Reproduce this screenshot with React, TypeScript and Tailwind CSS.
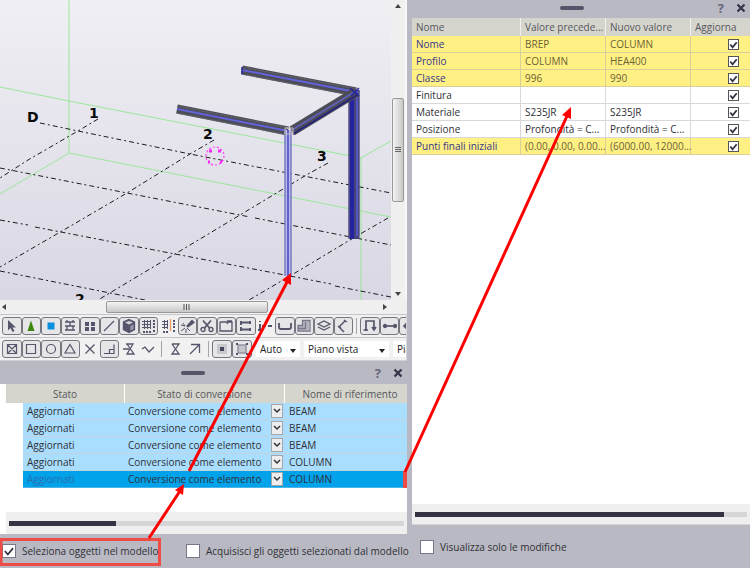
import { useState } from "react";
import type { ReactNode } from "react";

type Tool = { name: string; icon: ReactNode; framed?: boolean };

const Icon = ({ children }: { children: ReactNode }) => (
  <svg viewBox="0 0 16 16" className="size-4" fill="none" stroke="#55556b" strokeWidth="1.3">
    {children}
  </svg>
);

const dots = (xs: number[], ys: number[], size: number) =>
  xs.flatMap((x) => ys.map((y) => <rect key={`${x}-${y}`} x={x} y={y} width={size} height={size} fill="#55556b" stroke="none" />));

const snapTools: Tool[] = [
  { name: "Seleziona", framed: true, icon: <path d="M4 2v10.500l2.500-2.500 2 4 2-1-2-3.500H12Z" fill="#55556b" stroke="none" /> },
  { name: "Componenti", framed: true, icon: <path d="M8 2.500 11.500 13h-7Z" fill="#3c870d" stroke="none" /> },
  { name: "Parti", framed: true, icon: <rect x="4.500" y="4.500" width="7" height="7" fill="#0a8ede" stroke="none" /> },
  { name: "Superfici", framed: true, icon: <path d="M3 4h10M3 8h10M3 12h10M8 4v4M5 8v4M11 8v4M5 2v2M11 2v2" /> },
  { name: "Punti", framed: true, icon: dots([3, 9], [4, 9], 4) },
  { name: "Linee", framed: true, icon: <path d="m3 13 10-10" /> },
  {
    name: "Solidi",
    framed: true,
    icon: (
      <>
        <path d="M8 1.500 13.500 4v7.500L8 14.500 2.500 11.500V4Z" fill="#55556b" />
        <path d="M4 4.500 8 3l4 1.500-4 2Z" fill="#d4d4da" stroke="none" />
        <path d="M9.500 8v4.500l3-1.500V6.500Z" fill="#9c9caa" stroke="none" />
      </>
    ),
  },
  { name: "Griglie", framed: true, icon: <><path d="M4.500 2v9M7.500 2v9M10.500 2v9M2 3.500h9M2 6.500h9M2 9.500h9" strokeWidth="1" />{dots([13], [2, 5, 8, 12], 2)}{dots([3, 6, 9], [13], 2)}</> },
  { name: "Linea griglia", icon: <>{dots([13], [2, 5, 8, 12], 2)}{dots([3, 6], [13], 2)}<path d="M4.500 2v9M7.500 2v9M2 3.500h6M2 6.500h6M2 9.500h6" strokeWidth="1" /><path d="M10.500 1v12" stroke="#ee9a63" /></> },
  { name: "Saldature", framed: true, icon: <><path d="m8 8 5-5.500 2 2L9 9Z" fill="#55556b" /><path d="M6 8 2 7M6 10l-4 3M7 11v4M6 8 4 5M8 10l3 3" strokeWidth="1" /></> },
  { name: "Tagli", framed: true, icon: <><path d="M4 2.500 10.500 10M12 2.500 5.500 10" strokeWidth="1.800" /><circle cx="4" cy="11.500" r="2" /><circle cx="12" cy="11.500" r="2" /></> },
  { name: "Viste", framed: true, icon: <path d="M2 4h7M2 4v9h12V4h-4l-1 2M9 3h5" /> },
  { name: "Bulloni", framed: true, icon: <path d="M3 3v4M3 9v4M3 4.500h10M3 11.500h10M12 3v3M12 10v3" strokeWidth="2" /> },
  { name: "Bullone singolo", icon: <path d="M3 3v1M3 6v6M5 8h4M11 8h4M1 12h3" strokeWidth="2" /> },
  { name: "Armature", framed: true, icon: <path d="M2 5v4q0 2 2 2h8q2 0 2-2V5" strokeWidth="1.800" /> },
  { name: "Getti", framed: true, icon: <><path d="M2 12V8h5V3h6v9Z" fill="#b4b4bd" stroke="none" /><path d="M2 7.500h4.500V2.500H14V13H2ZM2 10.500h7.500V4" stroke="#77778a" /></> },
  { name: "Livelli", framed: true, icon: <path d="m2 6 6-3 6 3-6 3ZM2 9l6 3 6-3" /> },
  { name: "Distanze", framed: true, icon: <path d="m10 3-6 6 5 5M3 8l3 2M9 2l3 2" strokeWidth="1.500" /> },
];

const moreTools: Tool[] = [
  { name: "Assemblaggi", framed: true, icon: <path d="M4 13V3h8v9M1.500 12H6M10 9l2 3 2-3" strokeWidth="1.700" /> },
  { name: "Oggetti", framed: true, icon: <><path d="M3 8h10" strokeWidth="1.700" /><circle cx="3" cy="8" r="1.500" fill="#55556b" /><circle cx="13" cy="8" r="1.500" fill="#55556b" /></> },
  { name: "Task", framed: true, icon: <path d="M3 8h11M6 5 3 8l3 3" strokeWidth="1.700" /> },
];

const pointTools: Tool[] = [
  { name: "Punti di riferimento", framed: true, icon: <path d="M3.500 3.500h9v9h-9ZM3.500 3.500l9 9M12.500 3.500l-9 9" strokeWidth="1.200" /> },
  { name: "Punti finali", framed: true, icon: <path d="M3.500 3.500h9v9h-9Z" strokeWidth="1.200" /> },
  { name: "Centri", framed: true, icon: <circle cx="8" cy="8" r="4.500" strokeWidth="1.200" /> },
  { name: "Punti medi", framed: true, icon: <path d="m8 3.500 5 8.500H3Z" strokeWidth="1.200" /> },
  { name: "Intersezioni", icon: <path d="m3.500 3.500 9 9M12.500 3.500l-9 9" /> },
  { name: "Perpendicolari", framed: true, icon: <path d="M3 12.500h10V3.500M8.500 12.500V8.500H13" strokeWidth="1.200" /> },
  { name: "Estensioni", icon: <path d="M5 3h7L6 13h7L6 3M2 8h6" /> },
  { name: "Qualsiasi posizione", icon: <path d="m2 8 3-2 4 5 5-5" /> },
];

const lineTools: Tool[] = [
  { name: "Vicino", icon: <path d="M5 3h7L5 13h7L5 3" /> },
  { name: "Direzione", icon: <path d="m3 13 9-9M4 3.500h8.500V12" /> },
];

const planeTools: Tool[] = [
  { name: "Piano", framed: true, icon: <><rect x="3" y="3" width="10" height="10" fill="#c8c8cf" stroke="none" /><rect x="6" y="6" width="4" height="4" fill="#44445a" stroke="none" /></> },
  { name: "Area", framed: true, icon: <><rect x="4" y="4" width="8" height="8" fill="#c4c4cc" stroke="#8a8a9a" />{dots([2, 12], [2, 12], 2)}</> },
];

const rows = ["BEAM", "BEAM", "BEAM", "COLUMN", "COLUMN"];

const changes = [
  { name: "Nome", before: "BREP", after: "COLUMN", changed: true },
  { name: "Profilo", before: "COLUMN", after: "HEA400", changed: true },
  { name: "Classe", before: "996", after: "990", changed: true },
  { name: "Finitura", before: "", after: "" },
  { name: "Materiale", before: "S235JR", after: "S235JR" },
  { name: "Posizione", before: "Profondità = C...", after: "Profondità = C..." },
  { name: "Punti finali iniziali", before: "(0.00, 0.00, 0.00...", after: "(6000.00, 12000...", changed: true },
];

function ToolGroup({ tools, className }: { tools: Tool[]; className: string }) {
  return (
    <div className={`flex shrink-0 ${className}`}>
      {tools.map((t) => (
        <button
          key={t.name}
          type="button"
          aria-label={t.name}
          className={`flex h-[18px] min-w-0 flex-1 items-center justify-center rounded-[3px] border ${
            t.framed ? "border-[#777780] bg-[#e6e6e8]" : "border-transparent"
          }`}
        >
          <Icon>{t.icon}</Icon>
        </button>
      ))}
    </div>
  );
}

const Divider = () => <span className="mx-[3px] h-4 w-px shrink-0 bg-[#a5a5ab]" />;

function ToolSelect({ label, value, className }: { label: string; value: string; className: string }) {
  return (
    <div className={`relative shrink-0 bg-white ${className}`}>
      <select aria-label={label} className="h-4 w-full appearance-none pl-1 leading-4 text-[#222]">
        <option>{value}</option>
      </select>
      <svg viewBox="0 0 6 4" className="pointer-events-none absolute top-2 right-1 h-1 w-1.5">
        <path d="M0 0h6L3 4Z" fill="#222" />
      </svg>
    </div>
  );
}

function PanelTitle({ className }: { className: string }) {
  return (
    <div className={`grid shrink-0 grid-cols-[44.5%_24px_1fr] items-center bg-[#b9b9c3] ${className}`}>
      <span className="col-start-2 h-1 rounded-full bg-[#55556a]" />
      <div className="flex items-center justify-end gap-3 pr-1">
        <button type="button" aria-label="Guida" className="text-[13px] leading-4 font-bold text-[#66667a]">
          ?
        </button>
        <button type="button" aria-label="Chiudi">
          <svg viewBox="0 0 10 10" className="size-2.5">
            <path d="m1.500 1.500 7 7M8.500 1.500l-7 7" stroke="#34344a" strokeWidth="2.200" />
          </svg>
        </button>
      </div>
    </div>
  );
}

function CheckBox({ label, checked = false, large = false }: { label?: string; checked?: boolean; large?: boolean }) {
  const [on, setOn] = useState(checked);
  return (
    <span className={`relative block shrink-0 ${large ? "size-3.5" : "size-[11px]"}`}>
      <input
        type="checkbox"
        aria-label={label}
        checked={on}
        onChange={() => setOn(!on)}
        className={`block size-full appearance-none border bg-white ${large ? "border-[#77778a]" : "border-[#555]"}`}
      />
      {on && (
        <svg viewBox="0 0 12 12" className="pointer-events-none absolute inset-0 size-full" fill="none">
          <path d="m2.500 6 2.500 3 4.500-5.500" stroke="#333344" strokeWidth={large ? 1.5 : 2} />
        </svg>
      )}
    </span>
  );
}

function ModelView() {
  return (
    <svg viewBox="0 0 391 300" preserveAspectRatio="xMinYMin slice" className="block h-75 min-w-0 flex-1 bg-linear-to-b from-[#f0eff4] to-[#d9d7e3]">
      <g stroke="#9be79b" fill="none">
        <path d="M69 0v153L0 194M0 87l69 14 292 57v142M361 158l30-17M69 153l322 64" />
      </g>
      <g stroke="#1c1c20" fill="none" strokeDasharray="5 3 2 3">
        <path d="m40 123 38 8 112 23 201 39M0 168l127 25 123 24M255 218l136 27M0 220l28 5M35 227l140 27 115 22 41 8M335 286l56 11M0 271l145 29" />
        <path d="M98 119 78 131 28 160 0 178M214 140l-24 14-63 39-65 38-62 36M328 163l-20 11-68 41-65 39-77 46M388 218l-33 19-65 39-41 24" />
      </g>
      <g className="font-['DejaVu_Sans'] text-[14px] font-bold" fill="#0a0a0a">
        <text x="27" y="122">D</text>
        <text x="89" y="118">1</text>
        <text x="203" y="139">2</text>
        <text x="317" y="161">3</text>
        <text x="75" y="304">2</text>
      </g>
      <circle cx="215" cy="156" r="9" fill="none" stroke="#ff3cff" strokeWidth="1.200" strokeDasharray="2 2" />
      <path d="M209 151h3M218 151h3M208 162h2M220 162h2" stroke="#ff28ff" strokeWidth="3" />

      {/* rear column */}
      <path d="M354 90v149" stroke="#45457a" strokeWidth="11" />
      <path d="M352 90v149" stroke="#2424a0" strokeWidth="4" />
      <path d="M357 90v146" stroke="#5656c2" strokeWidth="2" />
      <path d="M349 90v148M359 90v146" stroke="#55558c" />

      {/* beams */}
      <g fill="none">
        <path d="m242 70 114 22M177 109l111 22" stroke="#4d4d57" strokeWidth="9" />
        <path d="m242 70 114 22M177 109l111 22" stroke="#6262da" strokeWidth="2" />
        <path d="m242 67 114 22M177 106l111 22M242 74l114 22M177 113l111 22" stroke="#6a6a76" strokeDasharray="2 1" />
        <path d="m292 131 64-39" stroke="#4d4d57" strokeWidth="10" />
        <path d="m292 130 64-39" stroke="#6161be" strokeWidth="1.500" />
        <path d="m293 134 64-39" stroke="#24247e" strokeWidth="1.500" />
        <path d="m242 67v7M350 88l9 8M359 88l-8 8" stroke="#22229a" strokeWidth="1.500" />
      </g>

      {/* front column */}
      <path d="M288 130v146" stroke="#b9b9e8" strokeWidth="7" />
      <path d="M285 130v146M291 130v146" stroke="#5d5dae" />
      <path d="M288 130v146" stroke="#4545ca" strokeWidth="1.500" />
      <path d="M285 128h8v6h-8ZM286 127l5 5" stroke="#c9bdba" fill="none" />
    </svg>
  );
}

export default function App() {
  return (
    <main className="relative grid grid-cols-[407fr_343fr] overflow-hidden bg-[#b9b9c3] font-['Open_Sans','Noto_Sans',sans-serif] text-[10px] leading-4 text-[#303036]">
      <div className="flex min-w-0 flex-col">
        <div className="flex border-r-2 border-[#f8f8f8]">
          <ModelView />
          <div className="flex w-3.5 shrink-0 flex-col items-center justify-between bg-[#f0f0f0] py-1">
            <svg viewBox="0 0 6 4" className="h-1 w-1.5"><path d="M0 4h6L3 0Z" fill="#444" /></svg>
            <div className="flex h-[104px] w-3 items-center justify-center rounded-xs border border-[#999] bg-linear-to-r from-[#f4f4f4] to-[#c8c8c8]">
              <svg viewBox="0 0 6 6" className="size-1.5"><path d="M0 .5h6M0 2.500h6M0 4.500h6" stroke="#666" /></svg>
            </div>
            <svg viewBox="0 0 6 4" className="h-1 w-1.5"><path d="M0 0h6L3 4Z" fill="#444" /></svg>
          </div>
        </div>
        <div className="flex h-3.5 items-center bg-[#f0f0f0] pr-5 pl-0.5">
          <svg viewBox="0 0 4 6" className="h-1.5 w-1"><path d="M4 0v6L0 3Z" fill="#444" /></svg>
          <div className="ml-[26%] flex h-3 w-[42%] items-center justify-center rounded-xs border border-[#999] bg-linear-to-b from-[#f4f4f4] to-[#c8c8c8]">
            <svg viewBox="0 0 7 6" className="h-1.5 w-[7px]"><path d="M1 0v6M3.500 0v6M6 0v6" stroke="#555" /></svg>
          </div>
          <svg viewBox="0 0 4 6" className="ml-auto h-1.5 w-1"><path d="M0 0v6L4 3Z" fill="#444" /></svg>
        </div>

        <div className="overflow-hidden border-r border-[#d8d8dc] bg-[#f1f1f2] text-[#222]">
          <div className="flex h-6 items-center border-y border-[#c5c5c8] pl-0.5">
            <ToolGroup tools={snapTools} className="w-[351px]" />
            <Divider />
            <ToolGroup tools={moreTools} className="w-[59px]" />
          </div>
          <div className="flex h-[22px] items-center pl-0.5">
            <ToolGroup tools={pointTools} className="w-[156px]" />
            <Divider />
            <ToolGroup tools={lineTools} className="w-10" />
            <Divider />
            <ToolGroup tools={planeTools} className="w-10" />
            <div className="ml-1 flex gap-1">
              <ToolSelect label="Profondità" value="Auto" className="w-11" />
              <ToolSelect label="Piano di lavoro" value="Piano vista" className="w-[85px]" />
              <ToolSelect label="Piano di vista" value="Piano contorno" className="w-[90px]" />
            </div>
          </div>
        </div>

        <PanelTitle className="h-6 border-t border-[#cfcfd6]" />
        <section className="flex flex-1 flex-col border-l-[6px] border-white bg-white">
          <table className="w-full table-fixed border-separate border-spacing-0 text-left">
            <colgroup>
              <col className="w-[17px]" />
              <col className="w-[102px]" />
              <col className="w-[160px]" />
              <col />
            </colgroup>
            <thead>
              <tr className="h-[19px] bg-[#d5d5ce] text-center text-[#55555c]">
                <th colSpan={2} className="border-r border-white p-0 font-normal">Stato</th>
                <th className="border-r border-white p-0 font-normal">Stato di conversione</th>
                <th className="p-0 pl-2 font-normal">Nome di riferimento</th>
              </tr>
            </thead>
            <tbody>
              {rows.map((name, i) => {
                const selected = i === rows.length - 1;
                const cell = selected ? "border-b border-[#4bb4e8] bg-[#00a2ea] p-0" : "border-b border-[#c3d3dd] bg-[#a9deff] p-0";
                return (
                  <tr key={i} className="h-[17px]">
                    <td className="p-0" />
                    <td className={`${cell} pl-1 ${selected ? "text-[#2b6fae]" : ""}`}>Aggiornati</td>
                    <td className={cell}>
                      <div className="relative">
                        <select aria-label={`Stato di conversione ${i + 1}`} className="block h-4 w-full appearance-none pl-[3px] leading-4">
                          <option>Conversione come elemento</option>
                        </select>
                        <span className="pointer-events-none absolute top-px right-0.5 grid h-3.5 w-3 place-items-center border border-[#a5a5aa] bg-[#eeeeee]">
                          <svg viewBox="0 0 8 6" className="h-1.5 w-2" fill="none"><path d="m1 1 3 3 3-3" stroke="#33333c" strokeWidth="1.500" /></svg>
                        </span>
                      </div>
                    </td>
                    <td className={`${cell} pl-1`}>{name}</td>
                  </tr>
                );
              })}
            </tbody>
          </table>
          <div className="mt-6 flex h-[22px] items-center bg-[#efefef] px-[3px]">
            <div className="h-[5px] w-full bg-[#d6d6d9]">
              <div className="h-full w-[27%] bg-[#333344]" />
            </div>
          </div>
        </section>
        <footer className="flex h-[35px] items-center border-b border-white whitespace-nowrap">
          <label className="flex w-[184px] shrink-0 items-center gap-1.5 pl-0.5">
            <CheckBox large checked />
            Seleziona oggetti nel modello
          </label>
          <label className="flex items-center gap-1.5 pl-0.5">
            <CheckBox large />
            Acquisisci gli oggetti selezionati dal modello
          </label>
        </footer>
      </div>

      <div className="flex min-w-0 flex-col">
        <PanelTitle className="h-[18px] pb-1" />
        <section className="ml-[5px] flex flex-1 flex-col border-b border-[#d5d5d8] bg-white">
          <table className="w-full table-fixed border-separate border-spacing-0 text-left">
            <colgroup>
              <col className="w-[109px]" />
              <col className="w-[85px]" />
              <col className="w-[85px]" />
              <col />
            </colgroup>
            <thead>
              <tr className="h-[18px] bg-[#d5d5ce] text-[#55555c]">
                {["Nome", "Valore precede...", "Nuovo valore", "Aggiorna"].map((h) => (
                  <th key={h} className="border-r border-[#efefeb] p-0 pl-1 font-normal whitespace-nowrap last:border-r-0">{h}</th>
                ))}
              </tr>
            </thead>
            <tbody>
              {changes.map((c) => {
                const cell = c.changed
                  ? "border-r border-b border-[#d9cf9a] bg-[#fff083] p-0 pl-1 whitespace-nowrap last:border-r-0"
                  : "border-r border-b border-[#d8d8dc] p-0 pl-1 whitespace-nowrap last:border-r-0";
                return (
                  <tr key={c.name} className="h-[17px]">
                    <td className={`${cell} ${c.changed ? "text-[#34348a]" : ""}`}>{c.name}</td>
                    <td className={`${cell} ${c.changed ? "text-[#6b6238]" : ""}`}>{c.before}</td>
                    <td className={`${cell} ${c.changed ? "text-[#6b6238]" : ""}`}>{c.after}</td>
                    <td className={cell}>
                      <div className="flex h-4 items-center justify-end pr-[11px]">
                        <CheckBox label={`Aggiorna ${c.name}`} checked />
                      </div>
                    </td>
                  </tr>
                );
              })}
            </tbody>
          </table>
          <div className="mt-auto flex h-5 items-center bg-[#efefef] px-[3px]">
            <div className="h-[5px] w-full bg-[#d6d6d9]">
              <div className="h-full w-[93%] bg-[#333344]" />
            </div>
          </div>
        </section>
        <footer className="flex h-11 items-center border-b border-white">
          <label className="flex items-center gap-1.5 pl-[13px]">
            <CheckBox large />
            Visualizza solo le modifiche
          </label>
        </footer>
      </div>

      {/* step arrows drawn over both panels */}
      <svg viewBox="0 0 750 569" preserveAspectRatio="none" className="pointer-events-none absolute inset-0 size-full" fill="none">
        <path d="M403 471h4v17h-4Z" fill="#ee4c44" />
        <path d="M1 539.500h158.500v25H1Z" stroke="#ee4c44" strokeWidth="3" />
        <g stroke="#ff0000" strokeWidth="3">
          <path d="m149 538 31-47M189 471l98-189M405 472l162-356" />
        </g>
        <path d="m184 484-1 11-8-5ZM291 273v12l-9-5ZM571 107v12l-9-4Z" fill="#ff0000" />
      </svg>
    </main>
  );
}
